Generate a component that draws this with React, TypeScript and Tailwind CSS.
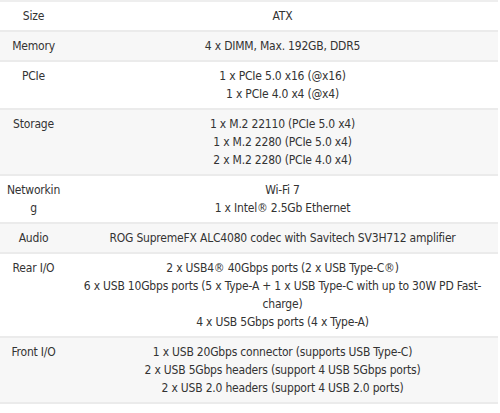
const specs: { label: string; lines: string[] }[] = [
	{ label: "Size", lines: ["ATX"] },
	{ label: "Memory", lines: ["4 x DIMM, Max. 192GB, DDR5"] },
	{ label: "PCIe", lines: ["1 x PCIe 5.0 x16 (@x16)", "1 x PCIe 4.0 x4 (@x4)"] },
	{
		label: "Storage",
		lines: ["1 x M.2 22110 (PCIe 5.0 x4)", "1 x M.2 2280 (PCIe 5.0 x4)", "2 x M.2 2280 (PCIe 4.0 x4)"]
	},
	{ label: "Networking", lines: ["Wi-Fi 7", "1 x Intel® 2.5Gb Ethernet"] },
	{ label: "Audio", lines: ["ROG SupremeFX ALC4080 codec with Savitech SV3H712 amplifier"] },
	{
		label: "Rear I/O",
		lines: [
			"2 x USB4® 40Gbps ports (2 x USB Type-C®)",
			"6 x USB 10Gbps ports (5 x Type-A + 1 x USB Type-C with up to 30W PD Fast-charge)",
			"4 x USB 5Gbps ports (4 x Type-A)"
		]
	},
	{
		label: "Front I/O",
		lines: [
			"1 x USB 20Gbps connector (supports USB Type-C)",
			"2 x USB 5Gbps headers (support 4 USB 5Gbps ports)",
			"2 x USB 2.0 headers (support 4 USB 2.0 ports)"
		]
	}
];

export default function App() {
	return (
		<div className="w-[498px] bg-white font-['DejaVu_Sans_Condensed','DejaVu_Sans',sans-serif] text-[12px] leading-[18px] tracking-[-0.2px] text-[#333]">
			<div className="border-t-2 border-[#eeeeee]">
				{specs.map((row, i) => (
					<div
						key={row.label}
						className={`grid grid-cols-[67px_1fr] border-b-2 border-[#ebebeb] ${i % 2 === 1 ? "bg-[#f7f7f7]" : "bg-white"}`}
					>
						{/* label cell */}
						<div className="px-[5px] py-[5px] text-center break-all">{row.label}</div>
						{/* value cell */}
						<div className="px-[8px] py-[5px] text-center">
							{row.lines.map((l) => (
								<div key={l}>{l}</div>
							))}
						</div>
					</div>
				))}
			</div>
		</div>
	);
}
